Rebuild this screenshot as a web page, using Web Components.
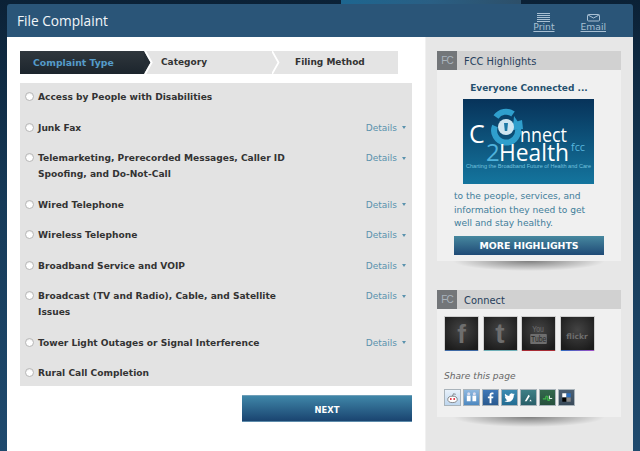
<!DOCTYPE html>
<html>
<head>
<meta charset="utf-8">
<title>File Complaint</title>
<style>
  html, body { margin: 0; height: 451px; overflow: hidden; }
  body {
    background: linear-gradient(180deg, #0b2136 0%, #163a58 45%, #1f4a6e 100%);
    font-family: "DejaVu Sans", Verdana, sans-serif;
  }
</style>
</head>
<body>
<fcc-page>
  <step-bar slot="main"></step-bar>
  <complaint-list slot="main">
    <complaint-row label="Access by People with Disabilities" nodetails></complaint-row>
    <complaint-row label="Junk Fax"></complaint-row>
    <complaint-row label="Telemarketing, Prerecorded Messages, Caller ID Spoofing, and Do-Not-Call"></complaint-row>
    <complaint-row label="Wired Telephone"></complaint-row>
    <complaint-row label="Wireless Telephone"></complaint-row>
    <complaint-row label="Broadband Service and VOIP"></complaint-row>
    <complaint-row label="Broadcast (TV and Radio), Cable, and Satellite Issues"></complaint-row>
    <complaint-row label="Tower Light Outages or Signal Interference"></complaint-row>
    <complaint-row label="Rural Call Completion" nodetails></complaint-row>
  </complaint-list>
  <next-button slot="main"></next-button>

  <side-card slot="side" title="FCC Highlights">
    <highlight-body></highlight-body>
  </side-card>
  <side-card slot="side" title="Connect" style="margin-top:29px">
    <connect-body></connect-body>
  </side-card>
</fcc-page>

<script>
// ── Page frame ──
class FccPage extends HTMLElement {
  constructor() {
    super();
    this.attachShadow({ mode: "open" }).innerHTML = `
      <style>
        :host { display: block; font-family: "DejaVu Sans", Verdana, sans-serif; }
        .topglow { width: 180px; height: 4px; margin-left: 341px;
          background: linear-gradient(90deg, #1d6690, #2a5f84 50%, #2d4f69); }
        .frame { margin: 0 7px; width: 626px; height: 447px; display: flex; flex-direction: column;
          border-radius: 3px 3px 0 0; overflow: hidden; }
        header { height: 33px; flex: none; background: #2a5578; display: flex; align-items: center;
          color: #fff; box-sizing: border-box; padding: 1px 27px 0 10px; }
        h1 { margin: 0; flex: 1; font: 400 13.7px/1 "Open Sans", "DejaVu Sans", sans-serif; color: #f2f5f8; }
        .tool { display: flex; flex-direction: column; align-items: center; margin-top: 2px;
          font: 9.2px/10px "DejaVu Sans", sans-serif; color: #a9c0d3; text-decoration: underline; }
        .tool svg { display: block; }
        .cols { flex: 1; display: flex; min-height: 0; }
        .main { width: 418px; box-sizing: border-box; background: #fff; padding: 14px 13px 0 13px; }
        .side { flex: 1; background: #e7e7e7; border-left: 1px solid #f1f1f1; padding: 14px 12px 0 11px; }
      </style>
      <div class="topglow"></div>
      <div class="frame">
        <header>
          <h1>File Complaint</h1>
          <span class="tool">
            <svg width="13" height="9" viewBox="0 0 13 9" fill="none" stroke="#a9c0d3" stroke-width="1">
              <path d="M0 .5h13M0 2.500h13M0 4.500h13M0 6.500h13M0 8.500h13"/>
            </svg>Print</span>
          <span class="tool" style="margin-left:26px">
            <svg width="13" height="9" viewBox="0 0 13 9" fill="none" stroke="#a9c0d3" stroke-width="1">
              <rect x=".5" y="1.500" width="12" height="6.500" rx="1"/><path d="M1 2l5.500 3L12 2"/>
            </svg>Email</span>
        </header>
        <div class="cols">
          <div class="main"><slot name="main"></slot></div>
          <div class="side"><slot name="side"></slot></div>
        </div>
      </div>`;
  }
}

// ── Step indicator ──
class StepBar extends HTMLElement {
  constructor() {
    super();
    this.attachShadow({ mode: "open" }).innerHTML = `
      <style>
        :host { display: block; width: 378px; height: 23px; }
        .bar { display: flex; height: 23px; background: #e4e4e4; position: relative;
          font: 700 9px/23px "DejaVu Sans", sans-serif; color: #333; }
        .step { box-sizing: border-box; }
        .one { width: 124px; padding-left: 13px; color: #559bc9; font-size: 9.3px;
          background: linear-gradient(180deg, #30373d, #1c252d); }
        .two { width: 128px; padding-left: 17px; }
        .three { flex: 1; padding-left: 23px; }
        svg { position: absolute; top: 0; height: 23px; }
      </style>
      <div class="bar">
        <div class="step one">Complaint Type</div>
        <div class="step two">Category</div>
        <div class="step three">Filing Method</div>
        <svg style="left:124px" width="10" viewBox="0 0 10 23"><path d="M0 0l6.500 11.500L0 23z" fill="#252d34"/><path d="M1.200 0l6.500 11.500L1.200 23" fill="none" stroke="#fff" stroke-width="1.800"/></svg>
        <svg style="left:252px" width="10" viewBox="0 0 10 23"><path d="M0 0l6.500 11.500L0 23" fill="none" stroke="#fff" stroke-width="1.800"/></svg>
      </div>`;
  }
}

// ── Complaint radio list ──
class ComplaintList extends HTMLElement {
  constructor() {
    super();
    this.attachShadow({ mode: "open" }).innerHTML = `
      <style>
        :host { display: flex; flex-direction: column; gap: 14.500px; width: 392px; height: 303px; box-sizing: border-box;
          margin-top: 9px; padding: 6px 6px 0 5px; background: #e3e3e3; }
      </style><slot></slot>`;
  }
}

class ComplaintRow extends HTMLElement {
  constructor() {
    super();
    this.attachShadow({ mode: "open" });
  }
  connectedCallback() {
    const details = this.hasAttribute("nodetails") ? "" :
      `<span class="details">Details<i></i></span>`;
    this.shadowRoot.innerHTML = `
      <style>
        :host { display: block; }
        .row { display: flex; align-items: flex-start; }
        .radio { flex: none; width: 7px; height: 7px; margin: 3px 4px 0 0; border-radius: 50%; background: #fff;
          border: 1px solid #b5b5b5; box-shadow: inset 0 1px 1px rgba(0,0,0,.08); }
        .label { width: 262px; font: 700 9.100px/16px "DejaVu Sans", sans-serif; color: #333; }
        .details { margin-left: auto; font: 400 9px/16px "DejaVu Sans", sans-serif; color: #5a92ad;
          display: flex; align-items: center; }
        .details i { width: 0; height: 0; margin-left: 5px; border: 2.500px solid transparent; border-top: 3px solid #5a92ad; border-bottom: 0; }
      </style>
      <div class="row">
        <span class="radio"></span>
        <span class="label">${this.getAttribute("label")}</span>
        ${details}
      </div>`;
  }
}

// ── Next button ──
class NextButton extends HTMLElement {
  constructor() {
    super();
    this.attachShadow({ mode: "open" }).innerHTML = `
      <style>
        :host { display: block; width: 170px; height: 27px; margin: 9px 0 0 222px; }
        button { display: block; width: 100%; height: 100%; padding: 3px 0 0; border: 0; border-top: 1px solid #6f9fb8; border-bottom: 1px solid #5d8bab;
          background: linear-gradient(180deg, #3f86a8, #1a4470); color: #fff;
          font: 700 8.400px/1 "DejaVu Sans", sans-serif; }
      </style>
      <button>NEXT</button>`;
  }
}

// ── Sidebar card ──
class SideCard extends HTMLElement {
  constructor() {
    super();
    this.attachShadow({ mode: "open" });
  }
  connectedCallback() {
    this.shadowRoot.innerHTML = `
      <style>
        :host { display: block; position: relative; width: 184px; }
        .head { height: 19px; display: flex; align-items: center; background: #d1d1d1; font: 9.900px/1 "DejaVu Sans", sans-serif; color: #27405c; }
        .head b { font-weight: 400; margin-top: 2px; }
        .mark { width: 20px; height: 19px; background: #737679; margin-right: 7px;
          font: 400 10px/19px "Liberation Sans", sans-serif; letter-spacing: -1px; color: #aab4bd; text-align: center; }
        .body { background: #f0f0f0; }
        .shadow { position: absolute; left: 16px; right: 16px; height: 10px; top: 100%;
          background: radial-gradient(ellipse 50% 100% at 50% 0, rgba(0,0,0,.45), rgba(0,0,0,0) 100%); }
      </style>
      <div class="head"><span class="mark">FC</span><b>${this.getAttribute("title")}</b></div>
      <div class="body"><slot></slot></div>
      <div class="shadow"></div>`;
  }
}

class HighlightBody extends HTMLElement {
  constructor() {
    super();
    this.attachShadow({ mode: "open" }).innerHTML = `
      <style>
        :host { display: block; height: 191px; box-sizing: border-box; padding-top: 10px; }
        h3 { margin: 0; text-align: center; font: 700 9px/16px "DejaVu Sans", sans-serif; color: #25506f; }
        .logo { display: block; margin: 3px 0 0 26px; }
        p { margin: 6px 0 0 17px; font: 9.100px/13.500px "DejaVu Sans", sans-serif; color: #3f7d9a; white-space: nowrap; }
        .more { margin: 5px 0 0 17px; width: 150px; height: 19px; box-sizing: border-box;
          background: linear-gradient(180deg, #47889f, #1f4a76); color: #fff; text-align: center;
          font: 700 9.400px/19px "DejaVu Sans", sans-serif; }
      </style>
      <h3>Everyone Connected ...</h3>
      <svg class="logo" width="131" height="85" viewBox="0 0 131 85">
        <defs><linearGradient id="lg" x1="0" y1="0" x2="0" y2="1">
          <stop offset="0" stop-color="#07335a"/><stop offset="1" stop-color="#14759e"/>
        </linearGradient></defs>
        <rect width="131" height="85" fill="url(#lg)"/>
        <path d="M33 18a12 12 0 0 1 17-3" fill="none" stroke="#2f9fcd" stroke-width="6"/>
        <path d="M55 30a12 12 0 1 1-23-3" fill="none" stroke="#2f9fcd" stroke-width="6"/>
        <path d="M51 17l8 12h-9z" fill="#2f9fcd"/>
        <path d="M49 24l10-3 1 9-10 1z" fill="#2f9fcd"/>
        <circle cx="43" cy="28" r="8" fill="#cfe6f1"/>
        <path d="M41 24h4l-.8 8h-2.400z" fill="#1e7aa6"/>
        <text x="6" y="44" font-family="'Open Sans',sans-serif" font-size="25" fill="#fff">C</text>
        <text x="57" y="43" textLength="47" lengthAdjust="spacingAndGlyphs" font-family="'Open Sans',sans-serif" font-size="20" fill="#fff">nnect</text>
        <text x="23" y="62" font-family="'Open Sans',sans-serif" font-size="24" fill="#4fb2dc">2</text>
        <text x="36" y="62" textLength="70" lengthAdjust="spacingAndGlyphs" font-family="'Open Sans',sans-serif" font-size="24" fill="#fff">Health</text>
        <text x="108" y="52" textLength="14" lengthAdjust="spacingAndGlyphs" font-family="'Open Sans',sans-serif" font-size="10" fill="#58b6de">fcc</text>
        <text x="3" y="69" textLength="125" lengthAdjust="spacingAndGlyphs" font-family="'Liberation Sans',sans-serif" font-size="4.500" fill="#73c1df">Charting the Broadband Future of Health and Care</text>
      </svg>
      <p>to the people, services, and<br>information they need to get<br>well and stay healthy.</p>
      <div class="more">MORE HIGHLIGHTS</div>`;
  }
}

class ConnectBody extends HTMLElement {
  constructor() {
    super();
    this.attachShadow({ mode: "open" }).innerHTML = `
      <style>
        :host { display: block; height: 108px; box-sizing: border-box; padding: 7px 0 0 7px; }
        .tiles { display: flex; gap: 3.500px; }
        .share-label { margin-top: 18.500px; font: italic 9.100px/13px "DejaVu Sans", sans-serif; color: #666; }
        .shares { display: flex; gap: 2px; margin-top: 6.500px; }
      </style>
      <div class="tiles">
        <social-tile text="f" size="26" family="'Liberation Sans'" weight="700" line="#3f6aa6"></social-tile>
        <social-tile text="t" size="28" family="'Liberation Sans'" weight="700" line="#6fb0b8"></social-tile>
        <social-tile text="You" sub="Tube" size="9.500" squeeze family="'Liberation Sans'" weight="400" line="#a92c35"></social-tile>
        <social-tile text="flickr" size="7.500" low family="'DejaVu Sans'" weight="700" line="linear-gradient(90deg,#2e6cc0,#a14ec8)"></social-tile>
      </div>
      <div class="share-label">Share this page</div>
      <div class="shares">
        <share-icon kind="reddit" bg="linear-gradient(#e8f1fa,#bed6ee)"></share-icon>
        <share-icon kind="digg" bg="linear-gradient(#8fb8df,#4d88c0)"></share-icon>
        <share-icon kind="fb" bg="linear-gradient(#3f78b8,#29598f)"></share-icon>
        <share-icon kind="tw" bg="linear-gradient(#3c8bb2,#226c92)"></share-icon>
        <share-icon kind="a" bg="linear-gradient(#3f7f86,#295f69)"></share-icon>
        <share-icon kind="su" bg="linear-gradient(#34694d,#264f3c)"></share-icon>
        <share-icon kind="del" bg="linear-gradient(#4c5f72,#394a5a)"></share-icon>
      </div>`;
  }
}

class SocialTile extends HTMLElement {
  constructor() {
    super();
    this.attachShadow({ mode: "open" });
  }
  connectedCallback() {
    const a = (n) => this.getAttribute(n);
    const sub = a("sub");
    const squeeze = this.hasAttribute("squeeze") ? "transform: scaleX(.72);" : "";
    const low = this.hasAttribute("low") ? "padding-top: 6px; box-sizing: border-box;" : "";
    this.shadowRoot.innerHTML = `
      <style>
        :host { display: block; width: 35px; height: 35px; border: 1px solid #cfcfcf; border-bottom: 0; box-sizing: border-box; overflow: hidden; }
        .t { height: 33px; background: radial-gradient(circle at 50% 40%, #444, #1c1c1c 85%);
          display: flex; flex-direction: column; align-items: center; justify-content: center; color: #6e6e6e;
          font: ${a("weight")} ${a("size")}px/1 ${a("family")}, sans-serif; ${low} }
        .t span { ${squeeze} }
        .sub { background: #6e6e6e; color: #2a2a2a; padding: 0 1px; margin-top: 1px; border-radius: 1px; }
        .line { height: 2px; background: ${a("line")}; }
      </style>
      <div class="t"><span>${a("text")}</span>${sub ? `<span class="sub">${sub}</span>` : ""}</div>
      <div class="line"></div>`;
  }
}

const SHARE_GLYPHS = {
  reddit: '<ellipse cx="8" cy="10" rx="5" ry="3.400" fill="#fff" stroke="#555" stroke-width=".7"/><circle cx="6.200" cy="9.600" r="1" fill="#d23"/><circle cx="9.800" cy="9.600" r="1" fill="#d23"/><path d="M8 6.600L9 4l2.500.6" fill="none" stroke="#555" stroke-width=".7"/>',
  digg: '<rect x="3" y="6" width="4" height="6" fill="#fff"/><rect x="9" y="6" width="4" height="6" fill="#fff"/><circle cx="5" cy="4" r="1.600" fill="#dde"/><circle cx="11" cy="4" r="1.600" fill="#dde"/>',
  fb: '<path d="M9 14V8.800h1.800l.3-2H9V5.600c0-.6.2-1 1-1h1.200V2.800C10.900 2.800 10.300 2.700 9.600 2.700 8 2.700 7 3.700 7 5.400v1.400H5.200v2H7V14z" fill="#fff"/>',
  tw: '<path d="M13.500 4.600c-.4.2-.8.3-1.300.4.5-.3.8-.7 1-1.200-.4.3-.9.4-1.400.5a2.300 2.300 0 0 0-3.900 2.100C6.100 6.300 4.400 5.400 3.300 4.100c-.6 1-.3 2.300.7 3-.4 0-.7-.1-1-.3 0 1.100.8 2.100 1.800 2.300-.3.1-.7.1-1 0 .3.900 1.100 1.600 2.100 1.600A4.700 4.700 0 0 1 2.500 11.700c1 .6 2.200 1 3.500 1 4.300 0 6.700-3.600 6.500-6.800.4-.3.800-.8 1-1.300z" fill="#fff"/>',
  a: '<path d="M4 12L8 5l1.500 1.500L6 12zM10 10l1.500 2h-2.500z" fill="#fff"/>',
  su: '<path d="M3 9.500h3.200V7.500a1 1 0 0 1 2 0v2.500a1 1 0 0 0 2 0v-1.500" fill="none" stroke="#3fb54a" stroke-width="1.300"/><path d="M10 6v3h3" fill="none" stroke="#fff" stroke-width="1"/>',
  del: '<rect x="3.500" y="3.500" width="4.500" height="4.500" fill="#fff"/><rect x="8" y="3.500" width="4.500" height="4.500" fill="#2c6fc0"/><rect x="3.500" y="8" width="4.500" height="4.500" fill="#000"/><rect x="8" y="8" width="4.500" height="4.500" fill="#888"/>'
};

class ShareIcon extends HTMLElement {
  constructor() {
    super();
    this.attachShadow({ mode: "open" });
  }
  connectedCallback() {
    this.shadowRoot.innerHTML = `
      <style>
        :host { display: block; width: 17px; height: 17px; box-sizing: border-box; border: 1px solid #a9b3ba; background: ${this.getAttribute("bg")}; }
        svg { display: block; }
      </style>
      <svg width="15" height="15" viewBox="0 0 16 16">${SHARE_GLYPHS[this.getAttribute("kind")]}</svg>`;
  }
}

customElements.define("fcc-page", FccPage);
customElements.define("step-bar", StepBar);
customElements.define("complaint-list", ComplaintList);
customElements.define("complaint-row", ComplaintRow);
customElements.define("next-button", NextButton);
customElements.define("side-card", SideCard);
customElements.define("highlight-body", HighlightBody);
customElements.define("connect-body", ConnectBody);
customElements.define("social-tile", SocialTile);
customElements.define("share-icon", ShareIcon);
</script>
</body>
</html>
